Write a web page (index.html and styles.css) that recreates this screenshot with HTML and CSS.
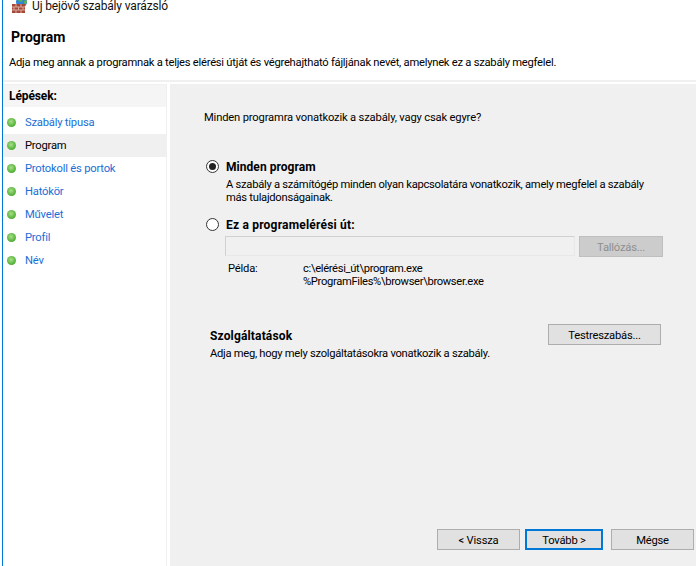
FILE: index.html
```html
<!DOCTYPE html>
<html lang="hu">
<head>
<meta charset="utf-8">
<title>Új bejövő szabály varázsló</title>
<link rel="stylesheet" href="styles.css">
</head>
<body>
<div class="window">
  <div class="titlebar">
    <svg class="appicon" width="16" height="16" viewBox="0 0 16 16">
      <circle cx="9.500" cy="5" r="5.500" fill="#2f86d6"/>
      <path d="M6 1l3-1 2.500 1.500-2 3.500-3-1z" fill="#5fb548"/>
      <path d="M12 4l2.500-1 .5 3-2.500 1.500z" fill="#5fb548"/>
      <rect x="0" y="7" width="13" height="9" fill="#a5483a"/>
      <path d="M0 10h13M0 13h13M4 7v3M9 7v3M2 10v3M6.500 10v3M11 10v3M4 13v3M9 13v3" stroke="#d9a898" stroke-width="1" fill="none"/>
    </svg>
    <span>Új bejövő szabály varázsló</span>
  </div>
  <header class="pagehead">
    <h1>Program</h1>
    <p>Adja meg annak a programnak a teljes elérési útját és végrehajtható fájljának nevét, amelynek ez a szabály megfelel.</p>
  </header>
  <div class="main">
    <nav class="steps">
      <div class="steps-title">Lépések:</div>
      <ul>
        <li class="step link"><i class="dot"></i>Szabály típusa</li>
        <li class="step current"><i class="dot"></i>Program</li>
        <li class="step link"><i class="dot"></i>Protokoll és portok</li>
        <li class="step link"><i class="dot"></i>Hatókör</li>
        <li class="step link"><i class="dot"></i>Művelet</li>
        <li class="step link"><i class="dot"></i>Profil</li>
        <li class="step link"><i class="dot"></i>Név</li>
      </ul>
    </nav>
    <section class="content">
      <p class="question">Minden programra vonatkozik a szabály, vagy csak egyre?</p>
      <div class="option first">
        <span class="radio checked"></span>
        <div class="option-body">
          <div class="option-label">Minden program</div>
          <p class="option-desc">A szabály a számítógép minden olyan kapcsolatára vonatkozik, amely megfelel a szabály<br>más tulajdonságainak.</p>
        </div>
      </div>
      <div class="option second">
        <span class="radio"></span>
        <div class="option-label">Ez a programelérési út:</div>
      </div>
      <div class="pathrow">
        <div class="pathinput"></div>
        <button class="btn disabled" type="button" disabled>Tallózás...</button>
      </div>
      <div class="example">
        <span class="example-label">Példa:</span>
        <span class="example-text">c:\elérési_út\program.exe<br>%ProgramFiles%\browser\browser.exe</span>
      </div>
      <div class="services">
        <div class="services-text">
          <div class="services-title">Szolgáltatások</div>
          <p>Adja meg, hogy mely szolgáltatásokra vonatkozik a szabály.</p>
        </div>
        <button class="btn custom" type="button">Testreszabás...</button>
      </div>
      <div class="footer">
        <button class="btn nav" type="button">&lt; Vissza</button>
        <button class="btn nav primary" type="button">Tovább &gt;</button>
        <button class="btn nav" type="button">Mégse</button>
      </div>
    </section>
  </div>
</div>
</body>
</html>
```

FILE: styles.css
```css
* { box-sizing: border-box; }
html, body { margin: 0; height: 100%; }
body {
  background: #fff;
  font-family: Roboto, "Liberation Sans", sans-serif;
  font-size: 11.2px;
  letter-spacing: -0.2px;
  color: #000;
  overflow: hidden;
}
p, h1, ul { margin: 0; padding: 0; }
.window {
  width: 694px;
  height: 566px;
  margin-left: 2px;
  border-left: 1px solid #0078d7;
  display: flex;
  flex-direction: column;
  overflow: hidden;
}
.titlebar {
  height: 14px;
  display: flex;
  align-items: flex-start;
  gap: 4px;
  padding-left: 9px;
  font-size: 12px;
  letter-spacing: -0.15px;
  line-height: 13px;
  color: #111;
}
.appicon { margin-top: -3px; flex: none; }
.pagehead {
  height: 68px;
  border-bottom: 2px solid #f0f0f0;
  padding: 15px 0 0 6px;
}
.pagehead h1 { font-size: 14px; letter-spacing: 0; line-height: 16px; font-weight: bold; padding-left: 2px; }
.pagehead p { line-height: 14px; margin-top: 11px; letter-spacing: -0.245px; }
.main { flex: 1; display: flex; gap: 3px; padding-top: 2px; }
.steps {
  width: 164px;
  flex: none;
  border-right: 1px solid #f0f0f0;
  border-top: 1px solid #f0f0f0;
}
.steps-title {
  height: 22px;
  background: #f5f5f5;
  font-weight: bold;
  font-size: 12px;
  letter-spacing: -0.1px;
  line-height: 22px;
  padding-left: 6px;
}
.steps ul { list-style: none; padding-top: 4px; }
.step {
  height: 23px;
  display: flex;
  align-items: center;
  padding-left: 4px;
}
.step.link { color: #1a6ed8; }
.step.current { background: #f0f0f0; }
.dot {
  width: 9px;
  height: 9px;
  border-radius: 50%;
  background: radial-gradient(circle at 45% 40%, #a8e08a, #4cae32 70%);
  margin-right: 9px;
  flex: none;
}
.content {
  flex: 1;
  background: #f0f0f0;
  padding: 27px 0 0 34px;
  display: flex;
  flex-direction: column;
  min-width: 0;
}
.question { line-height: 14px; letter-spacing: -0.165px; }
.option { display: flex; align-items: flex-start; gap: 7px; margin-left: 2px; }
.option.first { margin-top: 35px; }
.option.second { margin-top: 14px; }
.radio {
  width: 13px;
  height: 13px;
  border: 1px solid #333;
  border-radius: 50%;
  background: #fff;
  flex: none;
  display: flex;
  align-items: center;
  justify-content: center;
}
.radio.checked::after {
  content: "";
  width: 7px;
  height: 7px;
  border-radius: 50%;
  background: #222;
}
.option-label { font-weight: bold; font-size: 12px; letter-spacing: 0.05px; line-height: 15px; }
.option.second .option-label { letter-spacing: 0.2px; }
.option-desc { line-height: 13px; margin-top: 3px; white-space: nowrap; letter-spacing: -0.27px; }
.pathrow { display: flex; gap: 4px; margin: 3px 0 0 21px; }
.pathinput {
  width: 350px;
  height: 20px;
  background: #f0f0f0;
  border: 1px solid #d0d0d0;
  border-right-color: #e8e8e8;
  border-bottom-color: #e8e8e8;
}
.btn {
  font: inherit;
  letter-spacing: inherit;
  background: #e1e1e1;
  border: 1px solid #adadad;
  color: #000;
  padding: 1px 0 0;
  height: 21px;
  cursor: pointer;
}
.btn.disabled { width: 84px; background: #cccccc; border-color: #bfbfbf; color: #8f8f8f; }
.example { display: flex; margin: 5px 0 0 24px; line-height: 13px; }
.example-text { letter-spacing: -0.33px; }
.example-label { width: 75px; flex: none; }
.services {
  display: flex;
  justify-content: space-between;
  align-items: flex-start;
  margin: 36px 35px 0 6px;
}
.services-title { font-weight: bold; font-size: 12px; letter-spacing: 0.15px; line-height: 15px; margin-top: 5px; }
.services-text p { line-height: 14px; margin-top: 3px; letter-spacing: -0.28px; }
.btn.custom { width: 113px; }
.footer {
  margin-top: auto;
  display: flex;
  gap: 5px;
  padding: 0 2px 16px 233px;
}
.btn.nav { width: 83px; }
.btn.primary { width: 78px; border: 2px solid #0078d7; margin-right: 3px; }
```
